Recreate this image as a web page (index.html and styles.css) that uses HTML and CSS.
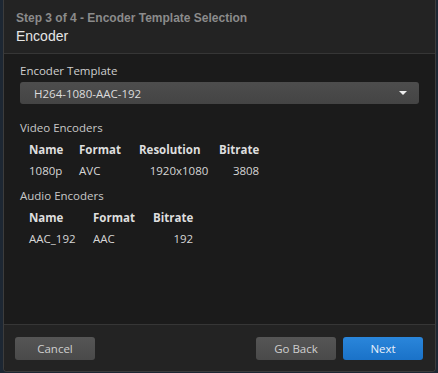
FILE: index.html
```html
<!DOCTYPE html>
<html lang="en">
<head>
    <meta charset="UTF-8">
    <title>Encoder Template Selection</title>
    <link rel="stylesheet" href="styles.css">
</head>
<body>
    <div class="modal">
        <!-- Header -->
        <div class="modal-header">
            <div class="step-title">Step 3 of 4 - Encoder Template Selection</div>
            <div class="modal-title">Encoder</div>
        </div>

        <!-- Body -->
        <div class="modal-body">
            <div class="field-label">Encoder Template</div>
            <div class="select-box">
                <span>H264-1080-AAC-192</span>
                <span class="caret"></span>
            </div>

            <div class="section-label">Video Encoders</div>
            <table class="enc-table video">
                <tr>
                    <th class="col-name">Name</th>
                    <th class="col-format">Format</th>
                    <th class="col-res">Resolution</th>
                    <th class="col-rate">Bitrate</th>
                </tr>
                <tr>
                    <td class="col-name">1080p</td>
                    <td class="col-format">AVC</td>
                    <td class="col-res">1920x1080</td>
                    <td class="col-rate">3808</td>
                </tr>
            </table>

            <div class="section-label second">Audio Encoders</div>
            <table class="enc-table audio">
                <tr>
                    <th class="col-name">Name</th>
                    <th class="col-format">Format</th>
                    <th class="col-rate">Bitrate</th>
                </tr>
                <tr>
                    <td class="col-name">AAC_192</td>
                    <td class="col-format">AAC</td>
                    <td class="col-rate">192</td>
                </tr>
            </table>
        </div>

        <!-- Footer -->
        <div class="modal-footer">
            <button class="btn">Cancel</button>
            <div class="footer-right">
                <button class="btn">Go Back</button>
                <button class="btn btn-primary">Next</button>
            </div>
        </div>
    </div>
</body>
</html>
```

FILE: styles.css
```css
html, body {
    margin: 0;
    padding: 0;
    height: 100%;
    background: #1d2733;
    font-family: 'Open Sans', sans-serif;
    color: #d0d0d0;
}

body {
    padding: 0 2px 1px 3px;
    box-sizing: border-box;
}

/* Modal box fills the window */
.modal {
    height: 100%;
    display: flex;
    flex-direction: column;
    background: #1b1b1b;
    border: 1px solid #3c3c3c;
    border-top: none;
    border-radius: 0 0 4px 4px;
    box-sizing: border-box;
}

.modal-header {
    height: 54px;
    background: #232323;
    border-bottom: 1px solid #363636;
    padding: 11px 12px 0 12px;
    box-sizing: border-box;
    font-family: 'Liberation Sans', Arial, sans-serif;
}

.step-title {
    font-size: 12px;
    font-weight: bold;
    color: #8b8b8b;
    line-height: 14px;
}

.modal-title {
    margin-top: 2px;
    font-size: 14px;
    color: #e6e6e6;
    line-height: 18px;
}

.modal-body {
    flex-grow: 1;
    padding: 10px 16px 0 16px;
    font-size: 11.5px;
}

.field-label {
    color: #cfcfcf;
    line-height: 14px;
}

.select-box {
    margin-top: 4px;
    height: 22px;
    background: linear-gradient(#4d4d4d, #444444);
    border-radius: 3px;
    display: flex;
    align-items: center;
    justify-content: space-between;
    padding: 0 12px 0 14px;
    color: #dcdcdc;
}

.caret {
    width: 0;
    height: 0;
    border-left: 4px solid transparent;
    border-right: 4px solid transparent;
    border-top: 4px solid #eeeeee;
}

.section-label {
    margin-top: 17px;
    color: #c8c8c8;
    line-height: 14px;
}

.section-label.second {
    margin-top: 8px;
}

.enc-table {
    border-collapse: collapse;
    margin-left: 9px;
    margin-top: 4px;
    color: #d6d6d6;
}

.enc-table th {
    font-weight: bold;
    text-align: left;
    padding: 0;
    height: 21px;
    color: #dedede;
}

.enc-table td {
    padding: 0;
    height: 21px;
}

.video .col-name { width: 50px; }
.video .col-format { width: 60px; }
.video .col-res { width: 80px; text-align: center; }
.video th.col-res { text-align: left; }
.video .col-rate { width: 39px; text-align: right; }
.video th.col-rate { text-align: left; }

.audio .col-name { width: 64px; }
.audio .col-format { width: 60px; }
.audio .col-rate { width: 39px; text-align: right; }
.audio th.col-rate { text-align: left; }

.modal-footer {
    height: 46px;
    background: #232323;
    border-top: 1px solid #363636;
    display: flex;
    justify-content: space-between;
    align-items: center;
    padding: 0 12px 0 11px;
    border-radius: 0 0 4px 4px;
}

.footer-right {
    display: flex;
    gap: 7px;
}

.btn {
    width: 80px;
    height: 23px;
    border: none;
    border-radius: 3px;
    background: linear-gradient(#555555, #4a4a4a);
    color: #cfcfcf;
    font-family: 'Open Sans', sans-serif;
    font-size: 11.5px;
    padding: 0;
    cursor: pointer;
}

.btn-primary {
    background: linear-gradient(#2a86db, #1a72c8);
    color: #e8f0fa;
}
```
